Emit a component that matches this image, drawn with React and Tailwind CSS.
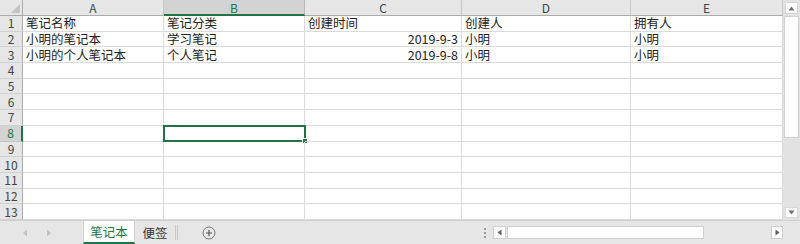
import React from "react";

const font = { fontFamily: '"Microsoft YaHei", "Noto Sans CJK SC", "Noto Sans", sans-serif' };

const cols = ["A", "B", "C", "D", "E"];
const data = [
  ["笔记名称", "笔记分类", "创建时间", "创建人", "拥有人"],
  ["小明的笔记本", "学习笔记", "2019-9-3", "小明", "小明"],
  ["小明的个人笔记本", "个人笔记", "2019-9-8", "小明", "小明"],
];

export default function App() {
  const rows = Array.from({ length: 13 }, (_, i) => i + 1);
  return (
    <div className="w-[800px] h-[244px] bg-[#e6e6e6] flex flex-col overflow-hidden text-[#222]" style={font}>
      <div className="flex h-[220px]">
        {/* sheet grid */}
        <div className="w-[783px] h-[220px] grid grid-cols-[23px_141px_141px_157px_169px_152px] grid-rows-[16px_repeat(13,minmax(0,1fr))] bg-white border-r border-[#c8c8c8]">
          {/* corner */}
          <div className="bg-[#e6e6e6] border-r border-b border-[#ababab] flex items-end justify-end pr-[2px] pb-[2px]">
            <svg width="9" height="9" viewBox="0 0 9 9">
              <polygon points="9,0 9,9 0,9" fill="#c4c4c4" />
            </svg>
          </div>
          {cols.map((c) =>
            c === "B" ? (
              <div key={c} className="bg-[#d3d3d3] border-r border-[#b8b8b8] border-b-2 border-b-[#217346] flex items-center justify-center text-[12px] text-[#217346] leading-[13px]">
                {c}
              </div>
            ) : (
              <div key={c} className="bg-[#e6e6e6] border-r border-[#c6c6c6] border-b border-b-[#ababab] flex items-center justify-center text-[12px] text-[#444] leading-[14px]">
                {c}
              </div>
            )
          )}
          {rows.map((r) => (
            <React.Fragment key={r}>
              {r === 8 ? (
                <div className="bg-[#d3d3d3] border-r-2 border-[#217346] border-b border-b-[#c6c6c6] flex items-center justify-center text-[12px] text-[#217346] leading-[14px]">
                  {r}
                </div>
              ) : (
                <div className="bg-[#e6e6e6] border-r border-[#ababab] border-b border-b-[#d0d0d0] flex items-center justify-center text-[12px] text-[#444] leading-[14px]">
                  {r}
                </div>
              )}
              {cols.map((c, ci) => {
                const v = data[r - 1] ? data[r - 1][ci] : "";
                const right = r > 1 && ci === 2;
                const sel = r === 8 && c === "B";
                return (
                  <div
                    key={c}
                    className={
                      "relative border-r border-b border-[#dadada] flex items-center text-[12.5px] leading-[14px] whitespace-nowrap " +
                      (right ? "justify-end pr-[3px]" : "pl-[3px]")
                    }
                  >
                    {v}
                    {sel && (
                      <div className="absolute -left-[1px] -top-[1px] -right-[2px] -bottom-[1px] border-2 border-[#217346]">
                        <div className="absolute -right-[4px] -bottom-[4px] w-[6px] h-[6px] bg-[#217346] border border-white" />
                      </div>
                    )}
                  </div>
                );
              })}
            </React.Fragment>
          ))}
        </div>
        {/* vertical scrollbar */}
        <div className="w-[17px] h-[220px] bg-[#e2e2e2] flex flex-col items-center">
          <div className="w-[13px] h-[12px] mt-[2px] bg-white border border-[#d8d8d8] flex items-center justify-center">
            <svg width="7" height="5" viewBox="0 0 7 5"><polygon points="3.5,0.5 6.5,4.5 0.5,4.5" fill="#707070" /></svg>
          </div>
          <div className="w-[15px] h-[122px] mt-[2px] bg-white border border-[#d0d0d0]" />
          <div className="flex-1" />
          <div className="w-[13px] h-[11px] mb-[2px] bg-white border border-[#d8d8d8] flex items-center justify-center">
            <svg width="7" height="5" viewBox="0 0 7 5"><polygon points="0.5,0.5 6.5,0.5 3.5,4.5" fill="#707070" /></svg>
          </div>
        </div>
      </div>
      {/* bottom sheet tab bar */}
      <div className="h-[24px] flex items-stretch bg-[#e6e6e6] border-t border-[#d0d0d0]">
        <div className="w-[83px] flex items-center">
          <svg className="ml-[22px]" width="6" height="8" viewBox="0 0 6 8"><polygon points="5,0.5 5,7.5 1,4" fill="#c2c2c2" /></svg>
          <svg className="ml-[18px]" width="6" height="8" viewBox="0 0 6 8"><polygon points="1,0.5 1,7.5 5,4" fill="#c2c2c2" /></svg>
        </div>
        <div className="w-[52px] bg-white border-x border-[#d4d4d4] border-b-2 border-b-[#217346] flex items-center justify-center text-[12.5px] text-[#217346] leading-[14px]">
          笔记本
        </div>
        <div className="w-[40px] flex items-center justify-center text-[12.5px] text-[#333] leading-[14px]">
          便签
        </div>
        <div className="w-[3px] my-[4px] border-x border-[#c8c8c8]" />
        <div className="w-[62px] flex items-center justify-center">
          <svg width="14" height="14" viewBox="0 0 14 14">
            <circle cx="7" cy="7" r="6" fill="none" stroke="#777" strokeWidth="1" />
            <path d="M7 4v6M4 7h6" stroke="#555" strokeWidth="1.2" />
          </svg>
        </div>
        <div className="flex-1" />
        <div className="w-[10px] flex flex-col items-center justify-center gap-[2px] mr-[3px]">
          <div className="w-[2px] h-[2px] bg-[#999]" />
          <div className="w-[2px] h-[2px] bg-[#999]" />
          <div className="w-[2px] h-[2px] bg-[#999]" />
        </div>
        <div className="w-[290px] flex items-center mr-[17px]">
          <div className="w-[13px] h-[13px] bg-white border border-[#cfcfcf] flex items-center justify-center">
            <svg width="5" height="7" viewBox="0 0 5 7"><polygon points="4.5,0.5 4.5,6.5 0.5,3.5" fill="#606060" /></svg>
          </div>
          <div className="w-[197px] h-[13px] bg-white border border-[#cfcfcf] ml-[1px]" />
          <div className="flex-1" />
          <div className="w-[12px] h-[13px] bg-white border border-[#cfcfcf] flex items-center justify-center">
            <svg width="5" height="7" viewBox="0 0 5 7"><polygon points="0.5,0.5 0.5,6.5 4.5,3.5" fill="#606060" /></svg>
          </div>
        </div>
      </div>
    </div>
  );
}
